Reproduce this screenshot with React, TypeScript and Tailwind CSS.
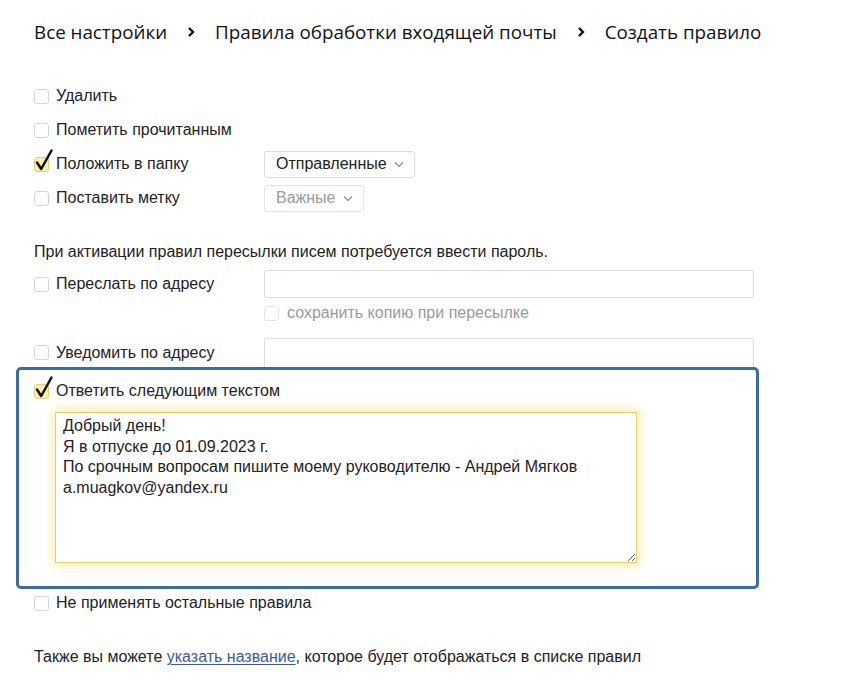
import React from "react";

function Box({ checked = false, faint = false }: { checked?: boolean; faint?: boolean }) {
  return (
    <span className="relative inline-block w-[15px] h-[15px] shrink-0">
      <span
        className={
          checked
            ? "absolute inset-0 rounded-[3px] border border-[#e6cf7c] bg-[#fcefa8]"
            : faint
            ? "absolute inset-0 rounded-[3px] border border-[#e6e6e6] bg-white"
            : "absolute inset-0 rounded-[3px] border border-[#d4d4d4] bg-white"
        }
      />
      {checked && (
        <svg
          className="absolute left-[1px] top-[-8px]"
          width="18"
          height="22"
          viewBox="0 0 18 22"
          fill="none"
        >
          <path d="M2 13.5 L6.2 20 L16.5 1.5" stroke="#111" strokeWidth="2.5" strokeLinecap="round" strokeLinejoin="round" />
        </svg>
      )}
    </span>
  );
}

function Chevron() {
  return (
    <svg width="10" height="7" viewBox="0 0 10 7" fill="none">
      <path d="M1 1.5 L5 5.5 L9 1.5" stroke="#8a8a8a" strokeWidth="1.1" />
    </svg>
  );
}

function Crumb() {
  return (
    <svg width="8" height="12" viewBox="0 0 8 12" fill="none">
      <path d="M2 2 L6 6 L2 10" stroke="#111" strokeWidth="2.4" />
    </svg>
  );
}

function Row({
  label,
  checked = false,
  children,
  h = "h-[34px]",
}: {
  label: string;
  checked?: boolean;
  children?: React.ReactNode;
  h?: string;
}) {
  return (
    <div className={`flex items-center ${h}`}>
      <div className="flex items-center gap-[7px] w-[230px]">
        <Box checked={checked} />
        <span>{label}</span>
      </div>
      {children}
    </div>
  );
}

export default function App() {
  return (
    <div className="w-[850px] h-[682px] bg-white overflow-hidden font-['Liberation_Sans',Arial,sans-serif] text-[16px] leading-[20px] text-[#222]">
      <div className="h-[64px] pl-[34px] flex items-center gap-[20px] font-['Open_Sans',sans-serif] text-[18.8px] text-[#111]">
        <span>Все настройки</span>
        <Crumb />
        <span>Правила обработки входящей почты</span>
        <Crumb />
        <span>Создать правило</span>
      </div>

      <div className="pl-[34px] mt-[15px]">
        <Row label="Удалить" />
        <Row label="Пометить прочитанным" />
        <Row label="Положить в папку" checked>
          <div className="h-[27px] pl-[11px] pr-[10px] flex items-center gap-[7px] border border-[#dcdcdc] rounded-[3px]">
            <span>Отправленные</span>
            <Chevron />
          </div>
        </Row>
        <Row label="Поставить метку">
          <div className="h-[27px] pl-[11px] pr-[10px] flex items-center gap-[7px] border border-[#e4e4e4] rounded-[3px] text-[#9a9a9a]">
            <span>Важные</span>
            <Chevron />
          </div>
        </Row>

        <p className="mt-[27px]">При активации правил пересылки писем потребуется ввести пароль.</p>

        <div className="mt-[8px]">
          <Row label="Переслать по адресу" h="h-[28px]">
            <div className="w-[490px] h-[28px] border border-[#dcdcdc] rounded-[2px]" />
          </Row>
        </div>
        <div className="mt-[5px] h-[20px] flex items-center pl-[230px] gap-[8px] text-[#9a9a9a]">
          <Box faint />
          <span>сохранить копию при пересылке</span>
        </div>
        <div className="mt-[15px]">
          <Row label="Уведомить по адресу" h="h-[29px]">
            <div className="w-[490px] h-[29px] border border-b-0 border-[#dcdcdc] rounded-t-[2px]" />
          </Row>
        </div>
      </div>

      <div className="ml-[16px] w-[743px] h-[222px] border-[3px] border-[#3b6c9c] rounded-[5px] pl-[15px] pt-[11px]">
        <div className="flex items-center gap-[7px] h-[20px]">
          <Box checked />
          <span>Ответить следующим текстом</span>
        </div>
        <textarea
          readOnly
          className="block mt-[11px] ml-[21px] w-[582px] h-[151px] border border-[#e9cf6c] pl-[7px] pt-[3px] font-['Liberation_Sans',Arial,sans-serif] text-[16px] leading-[20.5px] text-[#222] shadow-[0_0_10px_3px_rgba(250,214,80,0.45)] outline-none resize"
          defaultValue={
            "Добрый день!\nЯ в отпуске до 01.09.2023 г.\nПо срочным вопросам пишите моему руководителю - Андрей Мягков\na.muagkov@yandex.ru"
          }
        />
      </div>

      <div className="pl-[34px] mt-[4px]">
        <div className="flex items-center gap-[7px] h-[20px]">
          <Box />
          <span>Не применять остальные правила</span>
        </div>
        <p className="mt-[34px]">
          Также вы можете{" "}
          <span className="text-[#3c5a9a] underline decoration-1 underline-offset-[2px]">указать название</span>,
          которое будет отображаться в списке правил
        </p>
      </div>
    </div>
  );
}
